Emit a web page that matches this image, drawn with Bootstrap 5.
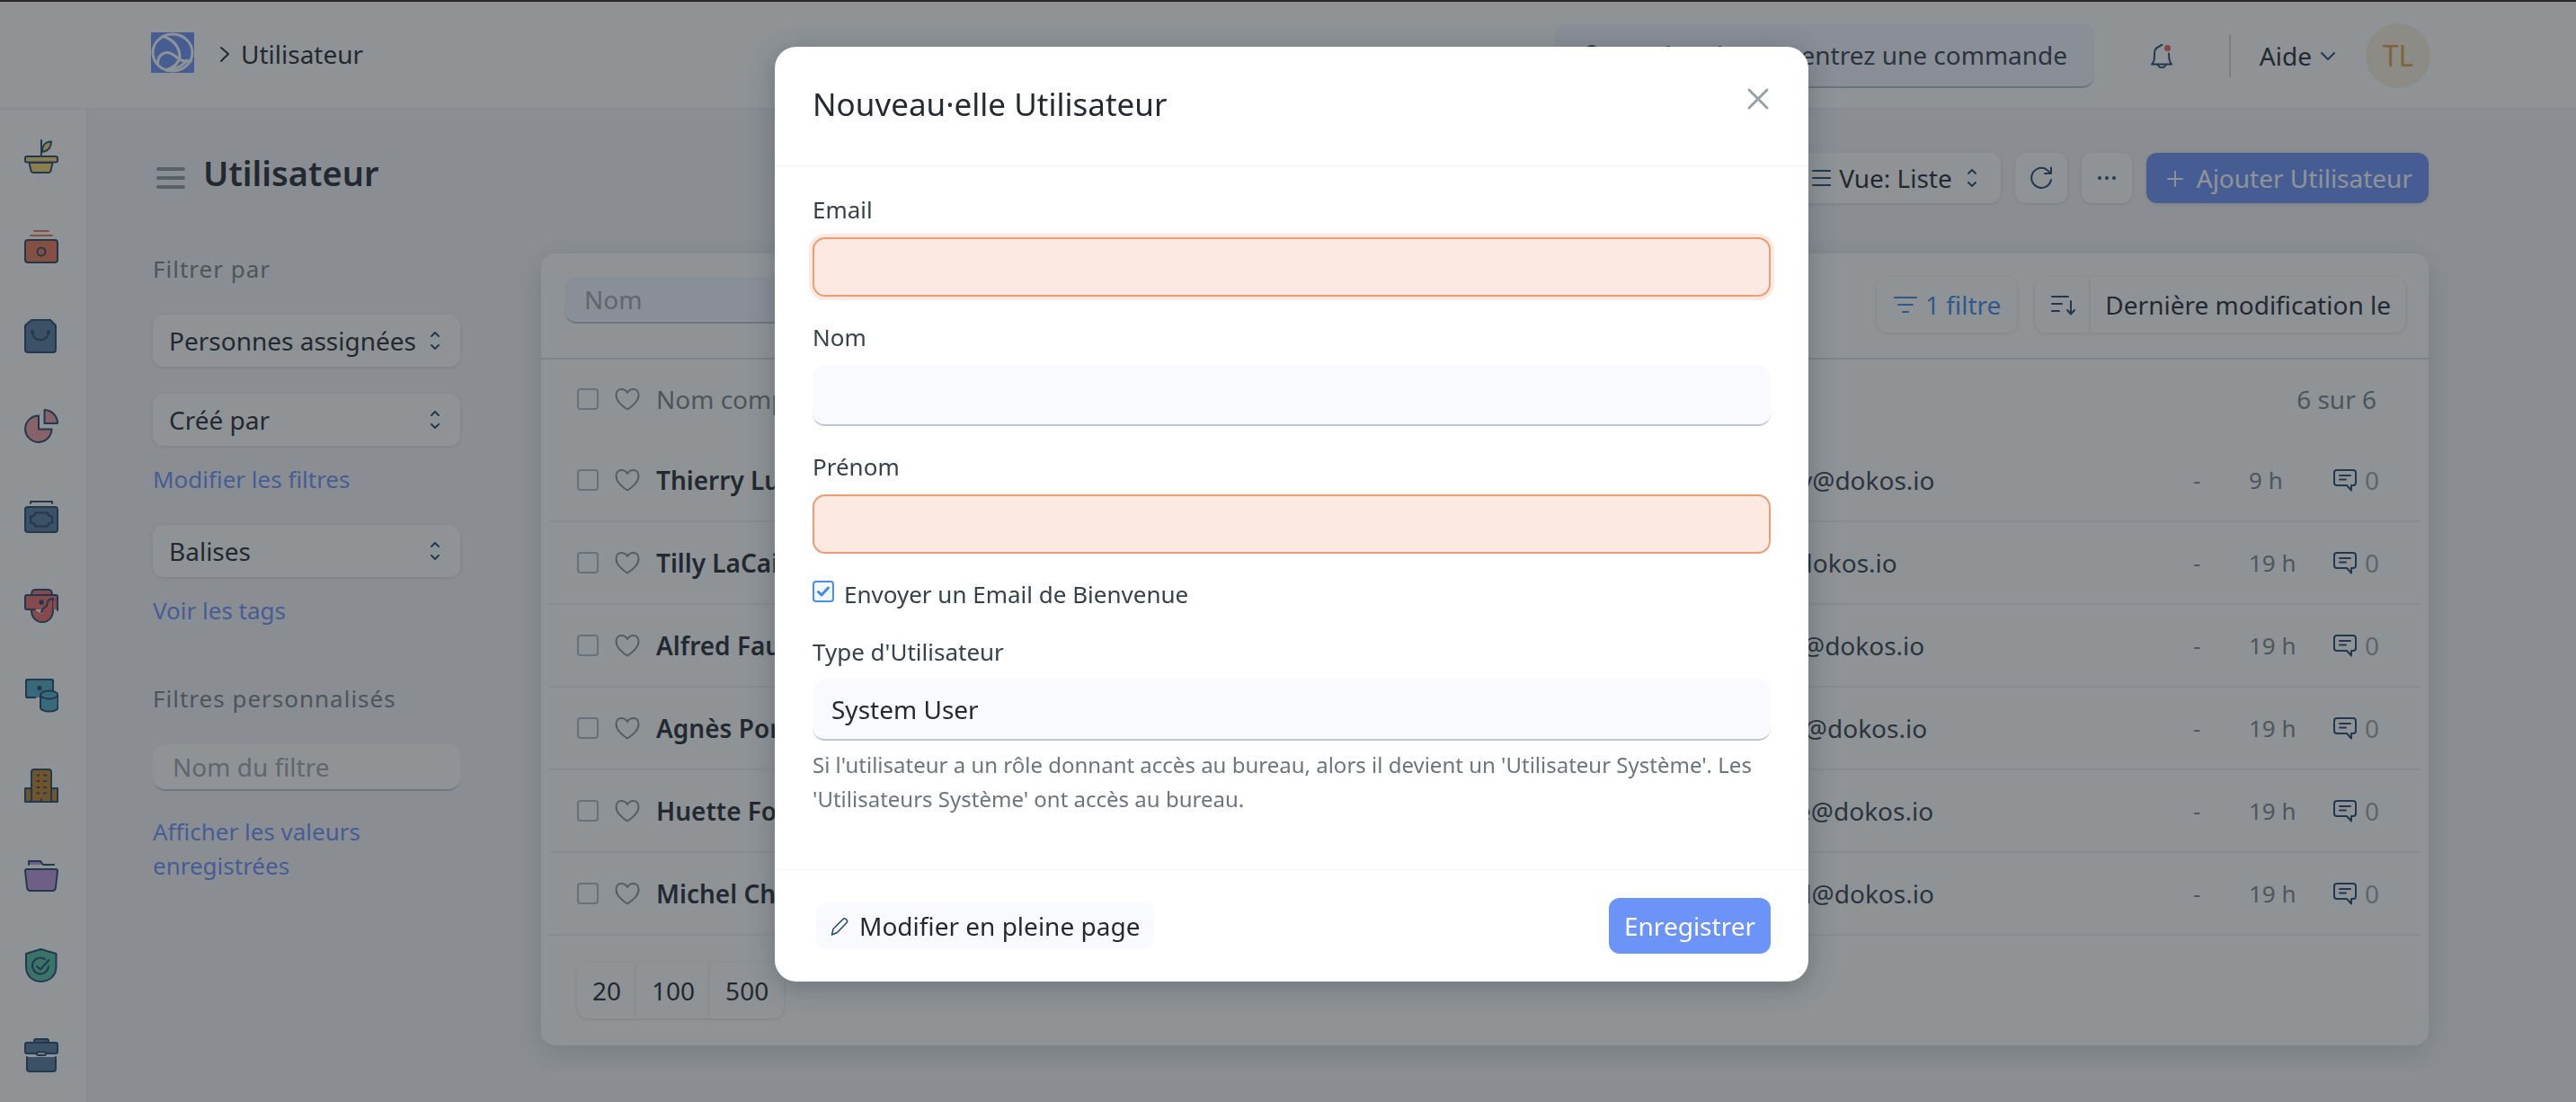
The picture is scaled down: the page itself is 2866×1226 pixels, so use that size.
<!DOCTYPE html>
<html lang="fr">
<head>
<meta charset="utf-8">
<meta name="viewport" content="width=device-width, initial-scale=1">
<title>Utilisateur</title>
<link href="https://cdn.jsdelivr.net/npm/bootstrap@5.3.0/dist/css/bootstrap.min.css" rel="stylesheet">
<style>
:root{--ink:#252a32;--soft:#36414c;--dim:#7b8388;--navy:#254970;--brand:#6c93f8;--field:#f4f4ff;--line:#f0f0f4}
body{font-family:"Noto Sans",sans-serif;font-size:28px;line-height:38px;color:var(--ink);background:#f5f5f8;min-height:100vh}
svg{display:block;flex:none;fill:none;stroke:var(--navy);stroke-width:2;stroke-linecap:round;stroke-linejoin:round}
svg.ico-ink{stroke:var(--ink)}
svg.ico-white{stroke:#fff}
svg.ico-blue{stroke:#3b8beb}
svg.ico-bars{stroke:#8d9a9c;stroke-width:4}
svg.ico-close{stroke:#98a1a9;stroke-width:3}
a{text-decoration:none;color:var(--brand)}
.topbar{background:#fff;border-top:2px solid #372922;border-bottom:2px solid var(--line);padding:24px 162px 22px 168px}
.finder{width:600px;height:72px;background:var(--field);border-radius:14px;border-bottom:2px solid #b9bcc8;padding:0 26px 0 30px;gap:20px}
.finder input,.finder input::placeholder{color:var(--soft);opacity:1}
.finder input{border:0;background:none;padding:0;min-width:0;width:100%}
.bell{margin:0 62px}
.vline{width:2px;height:48px;background:#d4d7da}
.face{width:72px;height:72px;border-radius:50%;background:#f9efdf;color:#d9a548;font-size:32px;border:0;margin-left:32px}
.rail{width:98px;background:#fff;border-right:2px solid var(--line);padding-top:2px}
.rail a{height:100px;padding-left:27px}
.workspace{padding:48px 164px 48px 72px;min-width:0}
.page-title{font-size:38px;line-height:44px;font-weight:600;margin:0 0 12px}
.tool{background:#fff;border:0;border-radius:12px;box-shadow:0 1px 4px rgba(25,39,52,.14);color:var(--ink);padding:0 18px;font-size:28px;line-height:38px}
.tool-blue{background:var(--brand);color:#fff}
.tool-filter{color:#3b8beb}
.toolbar .tool{height:56px}
.columns{margin-top:56px;gap:90px}
.side{width:342px;flex:none}
.side .tool{height:58px}
.side .tool + .tool{margin-top:30px}
.side h2{font-size:26px;line-height:34px;font-weight:400;color:var(--dim);margin:0 0 34px;letter-spacing:1px}
.side a{display:block;font-size:26px;margin:18px 0 32px}
.side .tags-link{margin-bottom:62px}
.side .saved-link{margin-top:26px}
.entry{background:#fff;border:0;border-bottom:2px solid #c0c4cc;border-radius:14px;height:52px;padding:0 22px;font-size:28px;color:var(--soft);width:100%}
.entry::placeholder{color:#a0a6aa;opacity:1}
.panel{background:#fff;border-radius:16px;box-shadow:0 8px 32px rgba(25,39,52,.16);min-width:0}
.panel-top{padding:26px 26px 28px;border-bottom:2px solid #dcdee4}
.panel-top .tool{height:62px}
.panel-top .entry{background:var(--field);width:360px}
.panel-tools{gap:20px}
.listing{margin:0 10px}
.listing table{width:100%;table-layout:fixed}
.listing td,.listing th{padding:0;font-weight:400;white-space:nowrap}
.listing .c-name{width:63%}
.listing .c-dash{width:62px}
.listing .c-ago{width:93px}
.listing .c-notes{width:97px}
.listing thead tr{height:88px;color:var(--dim)}
.listing tbody tr{height:92px;border-bottom:2px solid #f1f1f6}
.listing tbody .who{font-weight:600}
.listing .ago{font-size:26px;color:#80858a}
.listing .count{color:#9fa5a6}
.listing .mail{color:var(--soft);padding-left:6px}
.box{appearance:none;width:24px;height:24px;border:2px solid #b5babf;border-radius:4px;margin:0 18px 0 30px;flex:none;background:#fff}
svg.heart{stroke:#8d9297;margin-right:18px}
.pager{padding:30px}
.pager .tool{height:62px;border-radius:0;padding:0 17px}
.pager .tool:first-child{border-radius:12px 0 0 12px}
.pager .tool:last-child{border-radius:0 12px 12px 0}
.modal{padding-left:8px}
.modal-backdrop{--bs-backdrop-bg:#1f272e}
.modal-dialog{max-width:1150px;margin:52px auto}
.modal-content{border:0;border-radius:24px;box-shadow:0 6px 30px rgba(25,39,52,.3)}
.modal-header{padding:42px 42px 46px;border-bottom:2px solid #f7f7fd}
.modal-title{font-size:35px;line-height:44px;font-weight:400}
.closer{border:0;background:none;padding:2px 0;height:32px}
.modal-body{padding:29px 42px 59px}
.modal-body label{font-size:26px;line-height:36px;color:var(--soft);margin:0 0 13px;display:block}
.modal-body .slot{display:block;width:100%;height:68px;border:0;border-bottom:2px solid #c0c6cc;border-radius:14px;background:#f9faff;padding:0 21px;margin-bottom:27px;color:var(--ink);appearance:none}
.modal-body .needed{height:66px;border:2px solid #ef9b73;background:#fceae2}
.modal-body .needed.active{box-shadow:0 0 0 4px #fceae2}
.modal-body select.slot{margin-bottom:8px}
.tick-row{margin-bottom:28px}
.modal-body .tick-row label{margin:0}
.ticked{appearance:none;width:24px;height:24px;margin:3px 11px 0 0;border:2px solid #4a8fe8;border-radius:4px;background:#f2f8ff url("data:image/svg+xml,%3Csvg xmlns='http://www.w3.org/2000/svg' viewBox='0 0 20 20'%3E%3Cpath d='M4.500 10.500l3.500 3.500 7.500-8' fill='none' stroke='%23428ae8' stroke-width='3' stroke-linecap='round' stroke-linejoin='round'/%3E%3C/svg%3E") center/20px no-repeat}
.hint{font-size:24px;line-height:38px;color:#6c757c;margin:0}
.modal-footer{padding:30px 42px 31px 46px;border-top:2px solid #f7f7fd}
.modal-footer .soft-btn{height:52px;border:0;border-radius:12px;background:#f9faff;padding:0 16px;color:var(--ink)}
.modal-footer .save-btn{height:62px;border:0;border-radius:12px;background:var(--brand);color:#fff;padding:0 17px}
</style>
</head>
<body class="d-flex flex-column">
<svg width="0" height="0" class="position-absolute" aria-hidden="true">
<symbol id="i-updown" viewBox="0 0 12 20"><path d="M2 5l4-4 4 4M2 15l4 4 4-4"/></symbol>
<symbol id="i-heart" viewBox="0 0 28 26"><path d="M14 24.500C7 19.500 1.500 15 1.500 8.500 1.500 4.500 4 2 7.500 2c2.500 0 5 1.300 6.500 4 1.500-2.700 4-4 6.500-4C24 2 26.500 4.500 26.500 8.500 26.500 15 21 19.500 14 24.500z"/></symbol>
<symbol id="i-note" viewBox="0 0 28 26"><path d="M5 2h18a3 3 0 0 1 3 3v11a3 3 0 0 1-3 3h-2v5.500L16 19H5a3 3 0 0 1-3-3V5a3 3 0 0 1 3-3zM8 8h12M8 12.500h7"/></symbol>
</svg>

<header class="topbar d-flex align-items-center justify-content-between">
  <div class="d-flex align-items-center mb-1">
    <a href="#" aria-label="Dokos"><svg class="mb-1 ico-white" width="48" height="45" viewBox="0 0 48 45"><rect width="48" height="45" rx="1" fill="#6c93f8" stroke="none"/><g stroke-width="3"><ellipse cx="24" cy="22.500" rx="22" ry="20.500"/><path d="M14 4.500c11 4 17.500 12 18 22-1 9-8 13-15 15.500M7.500 34C8 26 13 22 19 22.500c9 1 11 12 25.500 9.500M18 42c9-1 18-5 22-11"/></g></svg></a>
    <svg class="ms-4 ico-ink" width="20" height="22" viewBox="0 0 20 22"><path d="M6 4l8 7-8 8"/></svg>
    <span class="ps-1 ms-1">Utilisateur</span>
  </div>
  <div class="d-flex align-items-center">
    <div class="finder d-flex align-items-center">
      <svg width="26" height="26" viewBox="0 0 26 26"><circle cx="11" cy="11" r="8"/><path d="M17 17l7 7"/></svg>
      <input type="text" aria-label="Recherche" placeholder="Rechercher ou entrez une commande">
    </div>
    <a href="#" class="bell" aria-label="Notifications"><svg width="26" height="28" viewBox="0 0 26 28"><path d="M13.500 2c-1 0-2 .5-2.500 1.500-4 1-6 4-6 8 0 6 0 9-3 12h22c-2-2-3-5-3-12M9 24c.5 4 8 4 8.500 0"/><circle cx="19.500" cy="5.500" r="3.500" fill="#e8605f" stroke="none"/></svg></a>
    <div class="vline"></div>
    <a href="#" class="d-flex align-items-center text-reset ps-4 ms-2">Aide<svg class="ms-2" width="20" height="20" viewBox="0 0 20 20"><path d="M3 7l7 7 7-7"/></svg></a>
    <button class="face p-0" type="button">TL</button>
  </div>
</header>

<div class="d-flex flex-fill">
  <nav class="rail flex-shrink-0 d-flex flex-column" aria-label="Modules">
    <a href="#" class="d-flex align-items-center" aria-label="Démarrage"><svg width="38" height="38" viewBox="0 0 38 38"><path d="M5.500 26l2 9q.500 2 2 2h18q1.500 0 2-2l2-9z" fill="#f9d36a"/><rect x="1" y="19" width="36" height="6.500" rx="2" fill="#f9d36a"/><path d="M20 14C20 6 23 3 30 2.500 30 9 27 13 20 14z" fill="#f9d36a"/><path d="M19 1v18"/></svg></a>
    <a href="#" class="d-flex align-items-center" aria-label="Comptabilité"><svg width="38" height="38" viewBox="0 0 38 38"><path d="M11 2h16M7 7h24" stroke="#eb7956"/><rect x="1" y="12" width="36" height="25" rx="3" fill="#eb7956"/><circle cx="19" cy="25" r="4.500"/></svg></a>
    <a href="#" class="d-flex align-items-center" aria-label="Achats"><svg width="38" height="38" viewBox="0 0 38 38"><path d="M8 1h21l6 6v27q0 3-3 3H4q-3 0-3-3V7z" fill="#557b9e"/><path d="M9 15c1 11 17 11 18 0"/><circle cx="9" cy="14.500" r="1"/><circle cx="27" cy="14.500" r="1"/></svg></a>
    <a href="#" class="d-flex align-items-center" aria-label="Ventes"><svg width="38" height="38" viewBox="0 0 38 38"><g fill="#ef9d9e"><path d="M16 7.500A14.700 14.700 0 1 0 30.500 22.500H16z"/><path d="M22.500 1A15 15 0 0 1 37 16H22.500z"/></g></svg></a>
    <a href="#" class="d-flex align-items-center" aria-label="Paiements"><svg width="38" height="38" viewBox="0 0 38 38"><path d="M7 5V3h24v2"/><rect x="1" y="9" width="36" height="28" rx="3" fill="#557b9e"/><path d="M12 15.500h14q0 4 5 4v7q-5 0-5 4H12q0-4-5-4v-7q5 0 5-4z"/></svg></a>
    <a href="#" class="d-flex align-items-center" aria-label="CRM"><svg width="38" height="38" viewBox="0 0 38 38"><path d="M8 7q0-6 4-6h15q4 0 4 6z" fill="#ed6d6c"/><path d="M8 22v2c0 17.500 24 17.500 24 0V10H8z" fill="#ed6d6c"/><path d="M1 9q0-2 2-2h32q2 0 2 2v14h-5V11c-7 0-6 7-8 8s-2 3-4 4H3q-2 0-2-2z" fill="#ed6d6c" stroke="none"/><path d="M11 23h9v5z" fill="#fff" stroke="none"/><path d="M12 23H3q-2 0-2-2V9q0-2 2-2h32q2 0 2 2v15"/><path d="M32 13v-2c-7 0-6 5-7 8-2 2-5 2-6 7"/><circle cx="19" cy="15" r="1.700" fill="#254970"/></svg></a>
    <a href="#" class="d-flex align-items-center" aria-label="Actifs"><svg width="38" height="38" viewBox="0 0 38 38"><path d="M12 21H4q-2 0-2-2V3q0-2 2-2h26q2 0 2 2v12" fill="#51adc6"/><path d="M2 3h30v12l-14 3v3H3z" fill="#51adc6" stroke="none"/><path d="M12 21H4q-2 0-2-2V3q0-2 2-2h26q2 0 2 2v12"/><circle cx="17" cy="10.500" r="1.700" fill="#254970"/><path d="M18 18v14c0 6 19.500 6 19.500 0V18z" fill="#51adc6"/><ellipse cx="27.700" cy="18" rx="9.700" ry="4.500" fill="#51adc6"/></svg></a>
    <a href="#" class="d-flex align-items-center" aria-label="Sociétés"><svg width="38" height="38" viewBox="0 0 38 38"><path d="M1 37V22h7v15zM30 22h7v15h-7z" fill="#c1832a"/><path d="M8 37V4q0-3 3-3h16q3 0 3 3v33z" fill="#c1832a"/><path d="M14.500 7.500h2M22 7.500h2M14.500 14h2M22 14h2M14.500 21h2M22 21h2M14.500 27.500h2M22 27.500h2M19 34v3"/></svg></a>
    <a href="#" class="d-flex align-items-center" aria-label="Fichiers"><svg width="38" height="38" viewBox="0 0 38 38"><path d="M5 7V3h13q2 0 3 4" fill="#c197dc" stroke="none"/><path d="M5 7V3h13l3 4h12"/><path d="M3 12h32q2 0 2 2l-2 18q-.5 4-3 4H6q-2.500 0-3-4L1 14q0-2 2-2z" fill="#c197dc"/></svg></a>
    <a href="#" class="d-flex align-items-center" aria-label="Qualité"><svg width="38" height="38" viewBox="0 0 38 38"><path d="M18.500 1l17 5v14c0 11-8 17-17 17S2 31 2 20V6z" fill="#55bfa0"/><path d="M23 12a9 9 0 1 0 4 8M14 20l4 3.500L27.500 13"/></svg></a>
    <a href="#" class="d-flex align-items-center" aria-label="Projets"><svg width="38" height="38" viewBox="0 0 38 38"><path d="M11 5V3q0-2 2-2h12q2 0 2 2v2" fill="#557b9e"/><rect x="1" y="5" width="36" height="12" rx="2" fill="#557b9e"/><path d="M3 21v13q0 3 3 3h26q3 0 3-3V21z" fill="#557b9e" stroke="none"/><path d="M3 21v13q0 3 3 3h26q3 0 3-3V21"/><rect x="14" y="15.500" width="10" height="3.500" rx="1.700" fill="#fff"/></svg></a>
  </nav>

  <main class="workspace flex-fill">
    <div class="toolbar d-flex align-items-center justify-content-between">
      <div class="d-flex align-items-center">
        <a href="#" class="ms-1 me-3" aria-label="Basculer le menu"><svg class="ico-bars" width="36" height="26" viewBox="0 0 36 26"><path d="M2 3h28M2 13h28M2 23h28"/></svg></a>
        <h1 class="page-title">Utilisateur</h1>
      </div>
      <div class="d-flex align-items-center gap-3">
        <button type="button" class="tool d-flex align-items-center"><svg width="30" height="22" viewBox="0 0 30 22"><path d="M9 3h19M9 11h19M9 19h19M3 3h0M3 11h0M3 19h0"/></svg><span class="mx-2">Vue: Liste</span><svg class="ms-2 me-2" width="12" height="20"><use href="#i-updown"/></svg></button>
        <button type="button" class="tool px-3" aria-label="Actualiser"><svg width="26" height="26" viewBox="0 0 26 26"><path d="M24 15A11 11 0 1 1 18 3l5 4M24 1.500V8h-7"/></svg></button>
        <button type="button" class="tool px-3" aria-label="Menu"><svg width="24" height="24" viewBox="0 0 24 24"><g fill="#254970" stroke="none"><circle cx="4" cy="12" r="2"/><circle cx="12" cy="12" r="2"/><circle cx="20" cy="12" r="2"/></g></svg></button>
        <button type="button" class="tool tool-blue d-flex align-items-center"><svg class="ico-white" width="30" height="28" viewBox="0 0 30 28"><path d="M6 15h16M14 7v16"/></svg><span class="ps-2">Ajouter Utilisateur</span></button>
      </div>
    </div>

    <div class="columns d-flex align-items-start">
      <aside class="side">
        <h2>Filtrer par</h2>
        <button type="button" class="tool w-100 d-flex align-items-center justify-content-between"><span>Personnes assignées</span><svg class="me-1" width="12" height="20"><use href="#i-updown"/></svg></button>
        <button type="button" class="tool w-100 d-flex align-items-center justify-content-between"><span>Créé par</span><svg class="me-1" width="12" height="20"><use href="#i-updown"/></svg></button>
        <a href="#">Modifier les filtres</a>
        <button type="button" class="tool w-100 d-flex align-items-center justify-content-between"><span>Balises</span><svg class="me-1" width="12" height="20"><use href="#i-updown"/></svg></button>
        <a href="#" class="tags-link">Voir les tags</a>
        <h2>Filtres personnalisés</h2>
        <input class="entry" type="text" aria-label="Nom du filtre" placeholder="Nom du filtre">
        <a href="#" class="saved-link">Afficher les valeurs enregistrées</a>
      </aside>

      <section class="panel flex-fill">
        <div class="panel-top d-flex align-items-start justify-content-between">
          <input class="entry" type="text" aria-label="Nom" placeholder="Nom">
          <div class="panel-tools d-flex">
            <button type="button" class="tool tool-filter d-flex align-items-center"><svg class="ico-blue" width="28" height="22" viewBox="0 0 28 22"><path d="M2 3h24M6 11h16M11 19h6"/></svg><span class="ps-2">1 filtre</span></button>
            <div class="btn-group">
              <button type="button" class="tool rounded-end-0 px-3" aria-label="Sens du tri"><svg width="30" height="26" viewBox="0 0 30 26"><path d="M3 4h18M3 12h11M3 20h8M24 9v14M20 19l4 4.500 4-4.500"/></svg></button>
              <button type="button" class="tool rounded-start-0 px-3">Dernière modification le</button>
            </div>
          </div>
        </div>
        <div class="listing">
          <table>
            <colgroup><col class="c-name"><col><col class="c-dash"><col class="c-ago"><col class="c-notes"></colgroup>
            <thead><tr><th><div class="d-flex align-items-center"><input type="checkbox" class="box" aria-label="Tout sélectionner"><svg class="heart" width="28" height="26"><use href="#i-heart"/></svg>Nom complet</div></th><th></th><th colspan="3" class="text-end pe-5">6 sur 6</th></tr></thead>
            <tbody>
              <tr><td><div class="d-flex align-items-center who"><input type="checkbox" class="box" aria-label="Sélectionner"><svg class="heart" width="28" height="26"><use href="#i-heart"/></svg>Thierry Luc</div></td><td class="mail">thierry@dokos.io</td><td class="ago">-</td><td class="ago">9 h</td><td class="count"><div class="d-flex align-items-center"><svg class="me-2" width="28" height="26"><use href="#i-note"/></svg>0</div></td></tr>
              <tr><td><div class="d-flex align-items-center who"><input type="checkbox" class="box" aria-label="Sélectionner"><svg class="heart" width="28" height="26"><use href="#i-heart"/></svg>Tilly LaCaille</div></td><td class="mail">tilly@dokos.io</td><td class="ago">-</td><td class="ago">19 h</td><td class="count"><div class="d-flex align-items-center"><svg class="me-2" width="28" height="26"><use href="#i-note"/></svg>0</div></td></tr>
              <tr><td><div class="d-flex align-items-center who"><input type="checkbox" class="box" aria-label="Sélectionner"><svg class="heart" width="28" height="26"><use href="#i-heart"/></svg>Alfred Faure</div></td><td class="mail">alfred@dokos.io</td><td class="ago">-</td><td class="ago">19 h</td><td class="count"><div class="d-flex align-items-center"><svg class="me-2" width="28" height="26"><use href="#i-note"/></svg>0</div></td></tr>
              <tr><td><div class="d-flex align-items-center who"><input type="checkbox" class="box" aria-label="Sélectionner"><svg class="heart" width="28" height="26"><use href="#i-heart"/></svg>Agnès Porte</div></td><td class="mail">agnes@dokos.io</td><td class="ago">-</td><td class="ago">19 h</td><td class="count"><div class="d-flex align-items-center"><svg class="me-2" width="28" height="26"><use href="#i-note"/></svg>0</div></td></tr>
              <tr><td><div class="d-flex align-items-center who"><input type="checkbox" class="box" aria-label="Sélectionner"><svg class="heart" width="28" height="26"><use href="#i-heart"/></svg>Huette Fortin</div></td><td class="mail">huette@dokos.io</td><td class="ago">-</td><td class="ago">19 h</td><td class="count"><div class="d-flex align-items-center"><svg class="me-2" width="28" height="26"><use href="#i-note"/></svg>0</div></td></tr>
              <tr><td><div class="d-flex align-items-center who"><input type="checkbox" class="box" aria-label="Sélectionner"><svg class="heart" width="28" height="26"><use href="#i-heart"/></svg>Michel Charon</div></td><td class="mail">michel@dokos.io</td><td class="ago">-</td><td class="ago">19 h</td><td class="count"><div class="d-flex align-items-center"><svg class="me-2" width="28" height="26"><use href="#i-note"/></svg>0</div></td></tr>
            </tbody>
          </table>
          <div class="pager d-flex"><button type="button" class="tool">20</button><button type="button" class="tool">100</button><button type="button" class="tool">500</button></div>
        </div>
      </section>
    </div>
  </main>
</div>

<div class="modal-backdrop show"></div>
<div class="modal d-block" role="dialog" aria-modal="true" aria-labelledby="dlg-title">
  <div class="modal-dialog">
    <form class="modal-content">
      <div class="modal-header d-flex align-items-start">
        <h4 class="modal-title" id="dlg-title">Nouveau·elle Utilisateur</h4>
        <button type="button" class="closer" aria-label="Fermer"><svg class="ico-close" width="28" height="28" viewBox="0 0 28 28"><path d="M4 4l20 20M24 4L4 24"/></svg></button>
      </div>
      <div class="modal-body">
        <label for="f-mail">Email</label>
        <input id="f-mail" class="slot needed active" type="email">
        <label for="f-nom">Nom</label>
        <input id="f-nom" class="slot" type="text">
        <label for="f-prenom">Prénom</label>
        <input id="f-prenom" class="slot needed" type="text">
        <div class="tick-row d-flex align-items-start">
          <input id="f-welcome" class="ticked" type="checkbox" checked>
          <label for="f-welcome">Envoyer un Email de Bienvenue</label>
        </div>
        <label for="f-type">Type d'Utilisateur</label>
        <select id="f-type" class="slot"><option>System User</option></select>
        <p class="hint">Si l'utilisateur a un rôle donnant accès au bureau, alors il devient un 'Utilisateur Système'. Les 'Utilisateurs Système' ont accès au bureau.</p>
      </div>
      <div class="modal-footer d-flex align-items-center justify-content-between">
        <button type="button" class="soft-btn d-flex align-items-center m-0"><svg width="20" height="24" viewBox="0 0 20 24"><g stroke-width="1.500"><path d="M1.500 22l1.500-6.500L14 4.500q1.500-1.500 3 0l1 1q1.500 1.500 0 3L7.500 19.500z"/></g></svg><span class="ms-2 ps-1">Modifier en pleine page</span></button>
        <button type="submit" class="save-btn m-0">Enregistrer</button>
      </div>
    </form>
  </div>
</div>
<script src="https://cdn.jsdelivr.net/npm/bootstrap@5.3.0/dist/js/bootstrap.bundle.min.js"></script>
</body>
</html>
